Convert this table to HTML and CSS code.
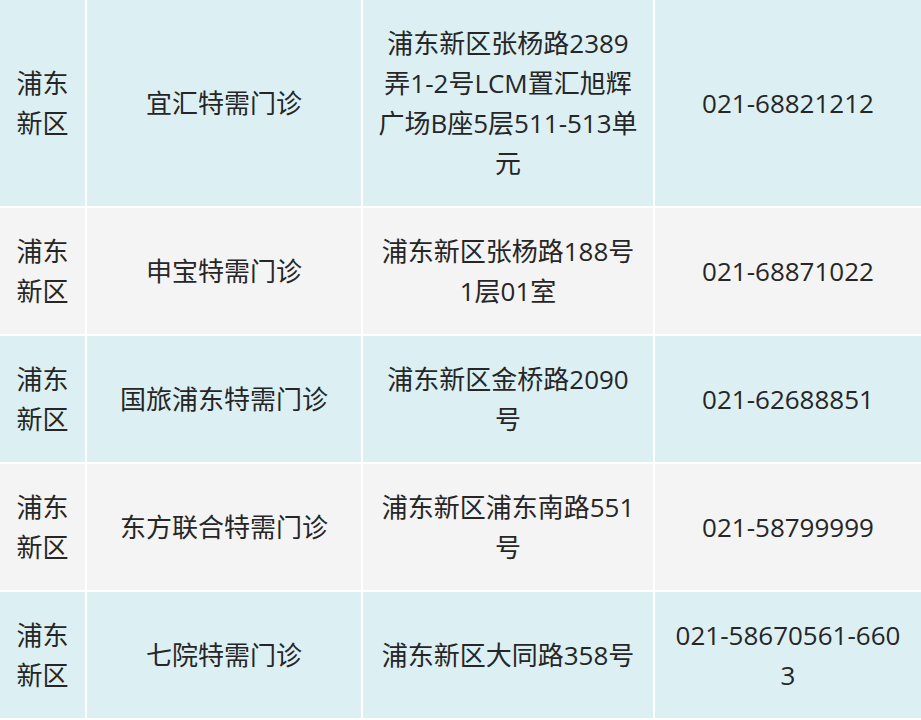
FILE: index.html
```html
<!DOCTYPE html>
<html lang="zh-CN">
<head>
<meta charset="utf-8">
<title>浦东新区特需门诊</title>
<link rel="stylesheet" href="styles.css">
</head>
<body>
<table class="clinics">
  <colgroup>
    <col class="c-district">
    <col class="c-name">
    <col class="c-addr">
    <col class="c-phone">
  </colgroup>
  <tbody>
    <tr class="row-a">
      <td>浦东新区</td>
      <td>宜汇特需门诊</td>
      <td>浦东新区张杨路2389弄1-2号LCM置汇旭辉广场B座5层511-513单元</td>
      <td>021-68821212</td>
    </tr>
    <tr class="row-b">
      <td>浦东新区</td>
      <td>申宝特需门诊</td>
      <td>浦东新区张杨路188号1层01室</td>
      <td>021-68871022</td>
    </tr>
    <tr class="row-a">
      <td>浦东新区</td>
      <td>国旅浦东特需门诊</td>
      <td>浦东新区金桥路2090号</td>
      <td>021-62688851</td>
    </tr>
    <tr class="row-b">
      <td>浦东新区</td>
      <td>东方联合特需门诊</td>
      <td>浦东新区浦东南路551号</td>
      <td>021-58799999</td>
    </tr>
    <tr class="row-a">
      <td>浦东新区</td>
      <td>七院特需门诊</td>
      <td>浦东新区大同路358号</td>
      <td>021-58670561-6603</td>
    </tr>
    <tr class="row-b row-next">
      <td></td>
      <td></td>
      <td></td>
      <td></td>
    </tr>
  </tbody>
</table>
</body>
</html>
```
FILE: styles.css
```css
html, body {
  margin: 0;
  padding: 0;
  background: #f4f4f4;
}

.clinics {
  width: 921px;
  table-layout: fixed;
  border-collapse: collapse;
  border-style: hidden;
  font-family: "Open Sans", "Noto Sans CJK SC", sans-serif;
  font-size: 26px;
  line-height: 40px;
  color: #262626;
}

.c-district { width: 86px; }
.c-name { width: 276px; }
.c-addr { width: 292px; }
.c-phone { width: 267px; }

.clinics td {
  border: 2px solid #ffffff;
  padding: 23px 14px;
  text-align: center;
  vertical-align: middle;
  word-break: break-all;
}

.row-a td { background: #dcf0f4; }
.row-b td { background: #f4f4f4; }

.row-next td { height: 80px; }
```
